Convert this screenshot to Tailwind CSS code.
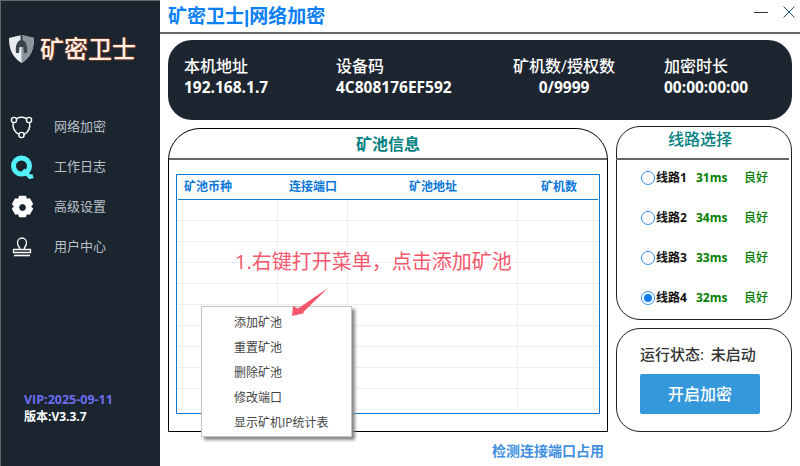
<!DOCTYPE html>
<html lang="zh-CN">
<head>
    <meta charset="UTF-8">
    <title>矿密卫士</title>
    <script src="https://cdn.jsdelivr.net/npm/@tailwindcss/browser@4"></script>
</head>
<body class="bg-white overflow-hidden font-['Open_Sans','Noto_Sans_CJK_SC',sans-serif]">
<div class="relative w-[800px] h-[466px] flex">
    <!-- Sidebar -->
    <aside class="w-[160px] h-full bg-[#1b2530] flex flex-col shrink-0 border-l border-t border-[#666]">
        <div class="h-[95px] flex items-center pl-[7px] gap-[5px]">
            <svg width="27" height="30" viewBox="0 0 27 30">
                <path d="M1 4 L13.5 1 L26 4 C26 15 23 23 13.5 29 C4 23 1 15 1 4Z" fill="#e9edf0"/>
                <path d="M13.5 1 L26 4 C26 15 23 23 13.5 29Z" fill="#8b949c"/>
                <path d="M8 19 C7 10 10 6 13.5 6 C17 6 20 10 19 19 L16 19 L15.5 13 L11.5 13 L11 19Z" fill="#3a444e"/>
                <rect x="12.5" y="1" width="2" height="6" fill="#3a444e"/>
            </svg>
            <span class="text-[24px] leading-none text-[#fdf0e4] font-medium [text-shadow:1px_0_#6b2f1e,-1px_0_#6b2f1e,0_1px_#6b2f1e,0_-1px_#6b2f1e]">矿密卫士</span>
        </div>
        <nav class="mt-[11px] flex flex-col">
            <div class="h-[40px] flex items-center pl-[8px]">
                <div class="w-[26px] flex justify-center">
                    <svg width="26" height="24" viewBox="0 0 26 24" fill="none" stroke="#fff" stroke-width="1.4">
                        <circle cx="5" cy="5" r="2.6"/><circle cx="20" cy="5" r="2.6"/><circle cx="12.5" cy="20" r="2.6"/>
                        <path d="M7.5 3.6 C10.5 2 14.5 2 17.5 3.6"/>
                        <path d="M4.2 7.8 C3.5 12.5 5.5 17 10 19.4"/>
                        <path d="M20.6 7.8 C21.3 12.5 19.5 17 15 19.4"/>
                    </svg>
                </div>
                <span class="ml-[19px] text-[13px] text-[#b9c0c6]">网络加密</span>
            </div>
            <div class="h-[40px] flex items-center pl-[8px]">
                <div class="w-[26px] flex justify-center">
                    <svg width="24" height="24" viewBox="0 0 24 24" fill="none">
                        <circle cx="11.5" cy="11" r="8" stroke="#53f2fb" stroke-width="5"/>
                        <path d="M13 15 L20 22 L23 21" stroke="#53f2fb" stroke-width="4"/>
                    </svg>
                </div>
                <span class="ml-[19px] text-[13px] text-[#b9c0c6]">工作日志</span>
            </div>
            <div class="h-[40px] flex items-center pl-[8px]">
                <div class="w-[26px] flex justify-center">
                    <svg width="25" height="25" viewBox="0 0 24 24">
                        <path fill="#fff" stroke="#fff" stroke-width="1.5" stroke-linejoin="round" fill-rule="evenodd" d="M9.2 1.5 h5.6 l1 3 2.8 -0.7 2.8 4.9 -2.1 2.3 2.1 2.3 -2.8 4.9 -2.8 -0.7 -1 3 h-5.6 l-1 -3 -2.8 0.7 -2.8 -4.9 2.1 -2.3 -2.1 -2.3 2.8 -4.9 2.8 0.7Z M12 8 a4 4 0 1 0 0.01 0Z"/>
                    </svg>
                </div>
                <span class="ml-[19px] text-[13px] text-[#b9c0c6]">高级设置</span>
            </div>
            <div class="h-[40px] flex items-center pl-[8px]">
                <div class="w-[26px] flex justify-center">
                    <svg width="20" height="20" viewBox="0 0 20 20" fill="none" stroke="#fff" stroke-width="1.3">
                        <path d="M7.5 10.5 C6 9 5.5 7.5 5.5 5.8 C5.5 3 7.5 1 10 1 C12.5 1 14.5 3 14.5 5.8 C14.5 7.5 14 9 12.5 10.5 V12.5 H1.5 V15.5 H18.5 V12.5 H7.5Z"/>
                        <path d="M2 18.5 H18" stroke-width="1.6"/>
                    </svg>
                </div>
                <span class="ml-[19px] text-[13px] text-[#b9c0c6]">用户中心</span>
            </div>
        </nav>
        <div class="mt-auto mb-[41px] pl-[23px] text-[12.5px] leading-[17px] font-bold">
            <div class="text-[#6a6ff0]">VIP:2025-09-11</div>
            <div class="text-white text-[12px]">版本:V3.3.7</div>
        </div>
    </aside>

    <!-- Main -->
    <main class="flex-1 min-w-0 flex flex-col">
        <header class="h-[34px] border-b-2 border-[#666] flex items-center pl-[8px] pr-[5px] shrink-0">
            <h1 class="text-[19px] leading-none font-bold text-[#0b7ff5] whitespace-nowrap">矿密卫士<span class="font-['Liberation_Sans',sans-serif]">|</span>网络加密</h1>
            <div class="ml-auto -mt-[8px] flex items-center gap-[15px]">
                <svg width="14" height="14" viewBox="0 0 14 14" stroke="#333" stroke-width="1"><path d="M0 7.5 H14"/></svg>
                <svg width="12" height="12" viewBox="0 0 12 12" stroke="#1f4f7f" stroke-width="1" fill="none"><path d="M0.5 0.5 L11.5 11.5 M11.5 0.5 L0.5 11.5"/></svg>
            </div>
        </header>

        <div class="flex-1 px-[8px] pt-[6px] min-h-0">
            <!-- Stats -->
            <section class="h-[80px] bg-[#1d2630] rounded-[24px] text-white relative">
                <div class="grid grid-cols-[152px_176px_152px_auto] pl-[16px] pt-[15px]">
                    <div>
                        <div class="text-[16px] leading-[22px] font-medium">本机地址</div>
                        <div class="text-[15.5px] leading-[20px] font-bold">192.168.1.7</div>
                    </div>
                    <div>
                        <div class="text-[16px] leading-[22px] font-medium">设备码</div>
                        <div class="text-[15.5px] leading-[20px] font-bold">4C808176EF592</div>
                    </div>
                    <div class="text-center w-[104px]">
                        <div class="text-[16px] leading-[22px] font-medium whitespace-nowrap">矿机数/授权数</div>
                        <div class="text-[15.5px] leading-[20px] font-bold">0/9999</div>
                    </div>
                    <div>
                        <div class="text-[16px] leading-[22px] font-medium">加密时长</div>
                        <div class="text-[15.5px] leading-[20px] font-bold">00:00:00:00</div>
                    </div>
                </div>
            </section>

            <div class="flex gap-[8px] mt-[8px] items-start">
                <!-- Pool info -->
                <section class="w-[440px] h-[304px] border border-black rounded-t-[32px] flex flex-col shrink-0">
                    <div class="h-[31px] border-b-2 border-[#666] flex items-center justify-center text-[16px] font-bold text-[#00807f] shrink-0">矿池信息</div>
                    <div class="mx-[7px] mt-[14px] h-[240px] border border-[#0a78d7] px-px overflow-hidden">
                        <div class="grid grid-cols-[100px_70px_170px_1fr] h-[25px] border-b border-[#0a78d7] text-[12px] font-bold text-[#0b78d9] items-center">
                            <div class="pl-[6px]">矿池币种</div>
                            <div class="pl-[11px] whitespace-nowrap">连接端口</div>
                            <div class="pl-[61px]">矿池地址</div>
                            <div class="pl-[23px]">矿机数</div>
                        </div>
                        <div class="grid grid-cols-[100px_70px_170px_1fr] auto-rows-[21px]">
                            <div class="border-r border-b border-[#eee]"></div><div class="border-r border-b border-[#eee]"></div><div class="border-r border-b border-[#eee]"></div><div class="border-b border-[#eee]"></div>
                            <div class="border-r border-b border-[#eee]"></div><div class="border-r border-b border-[#eee]"></div><div class="border-r border-b border-[#eee]"></div><div class="border-b border-[#eee]"></div>
                            <div class="border-r border-b border-[#eee]"></div><div class="border-r border-b border-[#eee]"></div><div class="border-r border-b border-[#eee]"></div><div class="border-b border-[#eee]"></div>
                            <div class="border-r border-b border-[#eee]"></div><div class="border-r border-b border-[#eee]"></div><div class="border-r border-b border-[#eee]"></div><div class="border-b border-[#eee]"></div>
                            <div class="border-r border-b border-[#eee]"></div><div class="border-r border-b border-[#eee]"></div><div class="border-r border-b border-[#eee]"></div><div class="border-b border-[#eee]"></div>
                            <div class="border-r border-b border-[#eee]"></div><div class="border-r border-b border-[#eee]"></div><div class="border-r border-b border-[#eee]"></div><div class="border-b border-[#eee]"></div>
                            <div class="border-r border-b border-[#eee]"></div><div class="border-r border-b border-[#eee]"></div><div class="border-r border-b border-[#eee]"></div><div class="border-b border-[#eee]"></div>
                            <div class="border-r border-b border-[#eee]"></div><div class="border-r border-b border-[#eee]"></div><div class="border-r border-b border-[#eee]"></div><div class="border-b border-[#eee]"></div>
                            <div class="border-r border-b border-[#eee]"></div><div class="border-r border-b border-[#eee]"></div><div class="border-r border-b border-[#eee]"></div><div class="border-b border-[#eee]"></div>
                            <div class="border-r border-b border-[#eee]"></div><div class="border-r border-b border-[#eee]"></div><div class="border-r border-b border-[#eee]"></div><div class="border-b border-[#eee]"></div>
                        </div>
                    </div>
                </section>

                <!-- Right column -->
                <div class="w-[176px] shrink-0 -mt-[2px] flex flex-col">
                    <section class="h-[194px] border border-[#222] rounded-[24px] flex flex-col">
                        <div class="h-[33px] mx-[-1px] mr-[2px] border-b-2 border-[#666] text-center text-[16px] leading-[24px] font-medium text-[#00807f] shrink-0 pr-[5px]">线路选择</div>
                        <div class="pl-[24px] -mt-[2px] flex flex-col">
                            <div class="h-[40px] flex items-center">
                                <span class="w-[14px] h-[14px] rounded-full border border-[#2b8cf2] bg-white shrink-0"></span>
                                <span class="ml-[1px] w-[40px] text-[12px] font-bold text-[#111] whitespace-nowrap">线路1</span>
                                <span class="w-[48px] text-[12px] font-bold text-[#008000]">31ms</span>
                                <span class="text-[12px] text-[#008000] font-medium">良好</span>
                            </div>
                            <div class="h-[40px] flex items-center">
                                <span class="w-[14px] h-[14px] rounded-full border border-[#2b8cf2] bg-white shrink-0"></span>
                                <span class="ml-[1px] w-[40px] text-[12px] font-bold text-[#111] whitespace-nowrap">线路2</span>
                                <span class="w-[48px] text-[12px] font-bold text-[#008000]">34ms</span>
                                <span class="text-[12px] text-[#008000] font-medium">良好</span>
                            </div>
                            <div class="h-[40px] flex items-center">
                                <span class="w-[14px] h-[14px] rounded-full border border-[#2b8cf2] bg-white shrink-0"></span>
                                <span class="ml-[1px] w-[40px] text-[12px] font-bold text-[#111] whitespace-nowrap">线路3</span>
                                <span class="w-[48px] text-[12px] font-bold text-[#008000]">33ms</span>
                                <span class="text-[12px] text-[#008000] font-medium">良好</span>
                            </div>
                            <div class="h-[40px] flex items-center">
                                <span class="w-[14px] h-[14px] rounded-full border border-[#2b8cf2] bg-white shrink-0 flex items-center justify-center"><span class="w-[8px] h-[8px] rounded-full bg-[#0f7cf0]"></span></span>
                                <span class="ml-[1px] w-[40px] text-[12px] font-bold text-[#111] whitespace-nowrap">线路4</span>
                                <span class="w-[48px] text-[12px] font-bold text-[#008000]">32ms</span>
                                <span class="text-[12px] text-[#008000] font-medium">良好</span>
                            </div>
                        </div>
                    </section>
                    <section class="mt-[8px] h-[104px] border border-[#222] rounded-[24px] pl-[23px] pt-[15px]">
                        <div class="text-[15px] leading-[20px] font-medium text-[#333] whitespace-nowrap">运行状态<span class="mr-[3px]">: </span>未启动</div>
                        <button class="mt-[10px] w-[120px] h-[40px] rounded-[2px] bg-[#3498db] text-white text-[16px] font-medium">开启加密</button>
                    </section>
                </div>
            </div>
            <div class="mt-[10px] pr-[188px] text-right text-[14px] leading-[18px] font-bold text-[#3f8fe0]">检测连接端口占用</div>
        </div>
    </main>

    <!-- Annotation and context menu overlaying the table -->
    <div class="absolute left-[235px] top-[248px] text-[20px] leading-[28px] text-[#f4566b] whitespace-nowrap">1.右键打开菜单，点击添加矿池</div>
    <div class="absolute left-[201px] top-[306px] w-[151px] h-[131px] bg-white border border-[#c4c4c4] shadow-[3px_3px_3px_#888] pt-[3px] pl-[32px] text-[12px] text-[#444]">
        <div class="h-[25px] leading-[25px]">添加矿池</div>
        <div class="h-[25px] leading-[25px]">重置矿池</div>
        <div class="h-[25px] leading-[25px]">删除矿池</div>
        <div class="h-[25px] leading-[25px]">修改端口</div>
        <div class="h-[25px] leading-[25px]">显示矿机IP统计表</div>
    </div>
    <svg class="absolute left-[288px] top-[286px]" width="44" height="32" viewBox="0 0 44 32">
        <path d="M4 30 L5 20 L10 22.5 L40 2 L15 26.5 L17 27Z" fill="#f4566b"/>
    </svg>
</div>
</body>
</html>
